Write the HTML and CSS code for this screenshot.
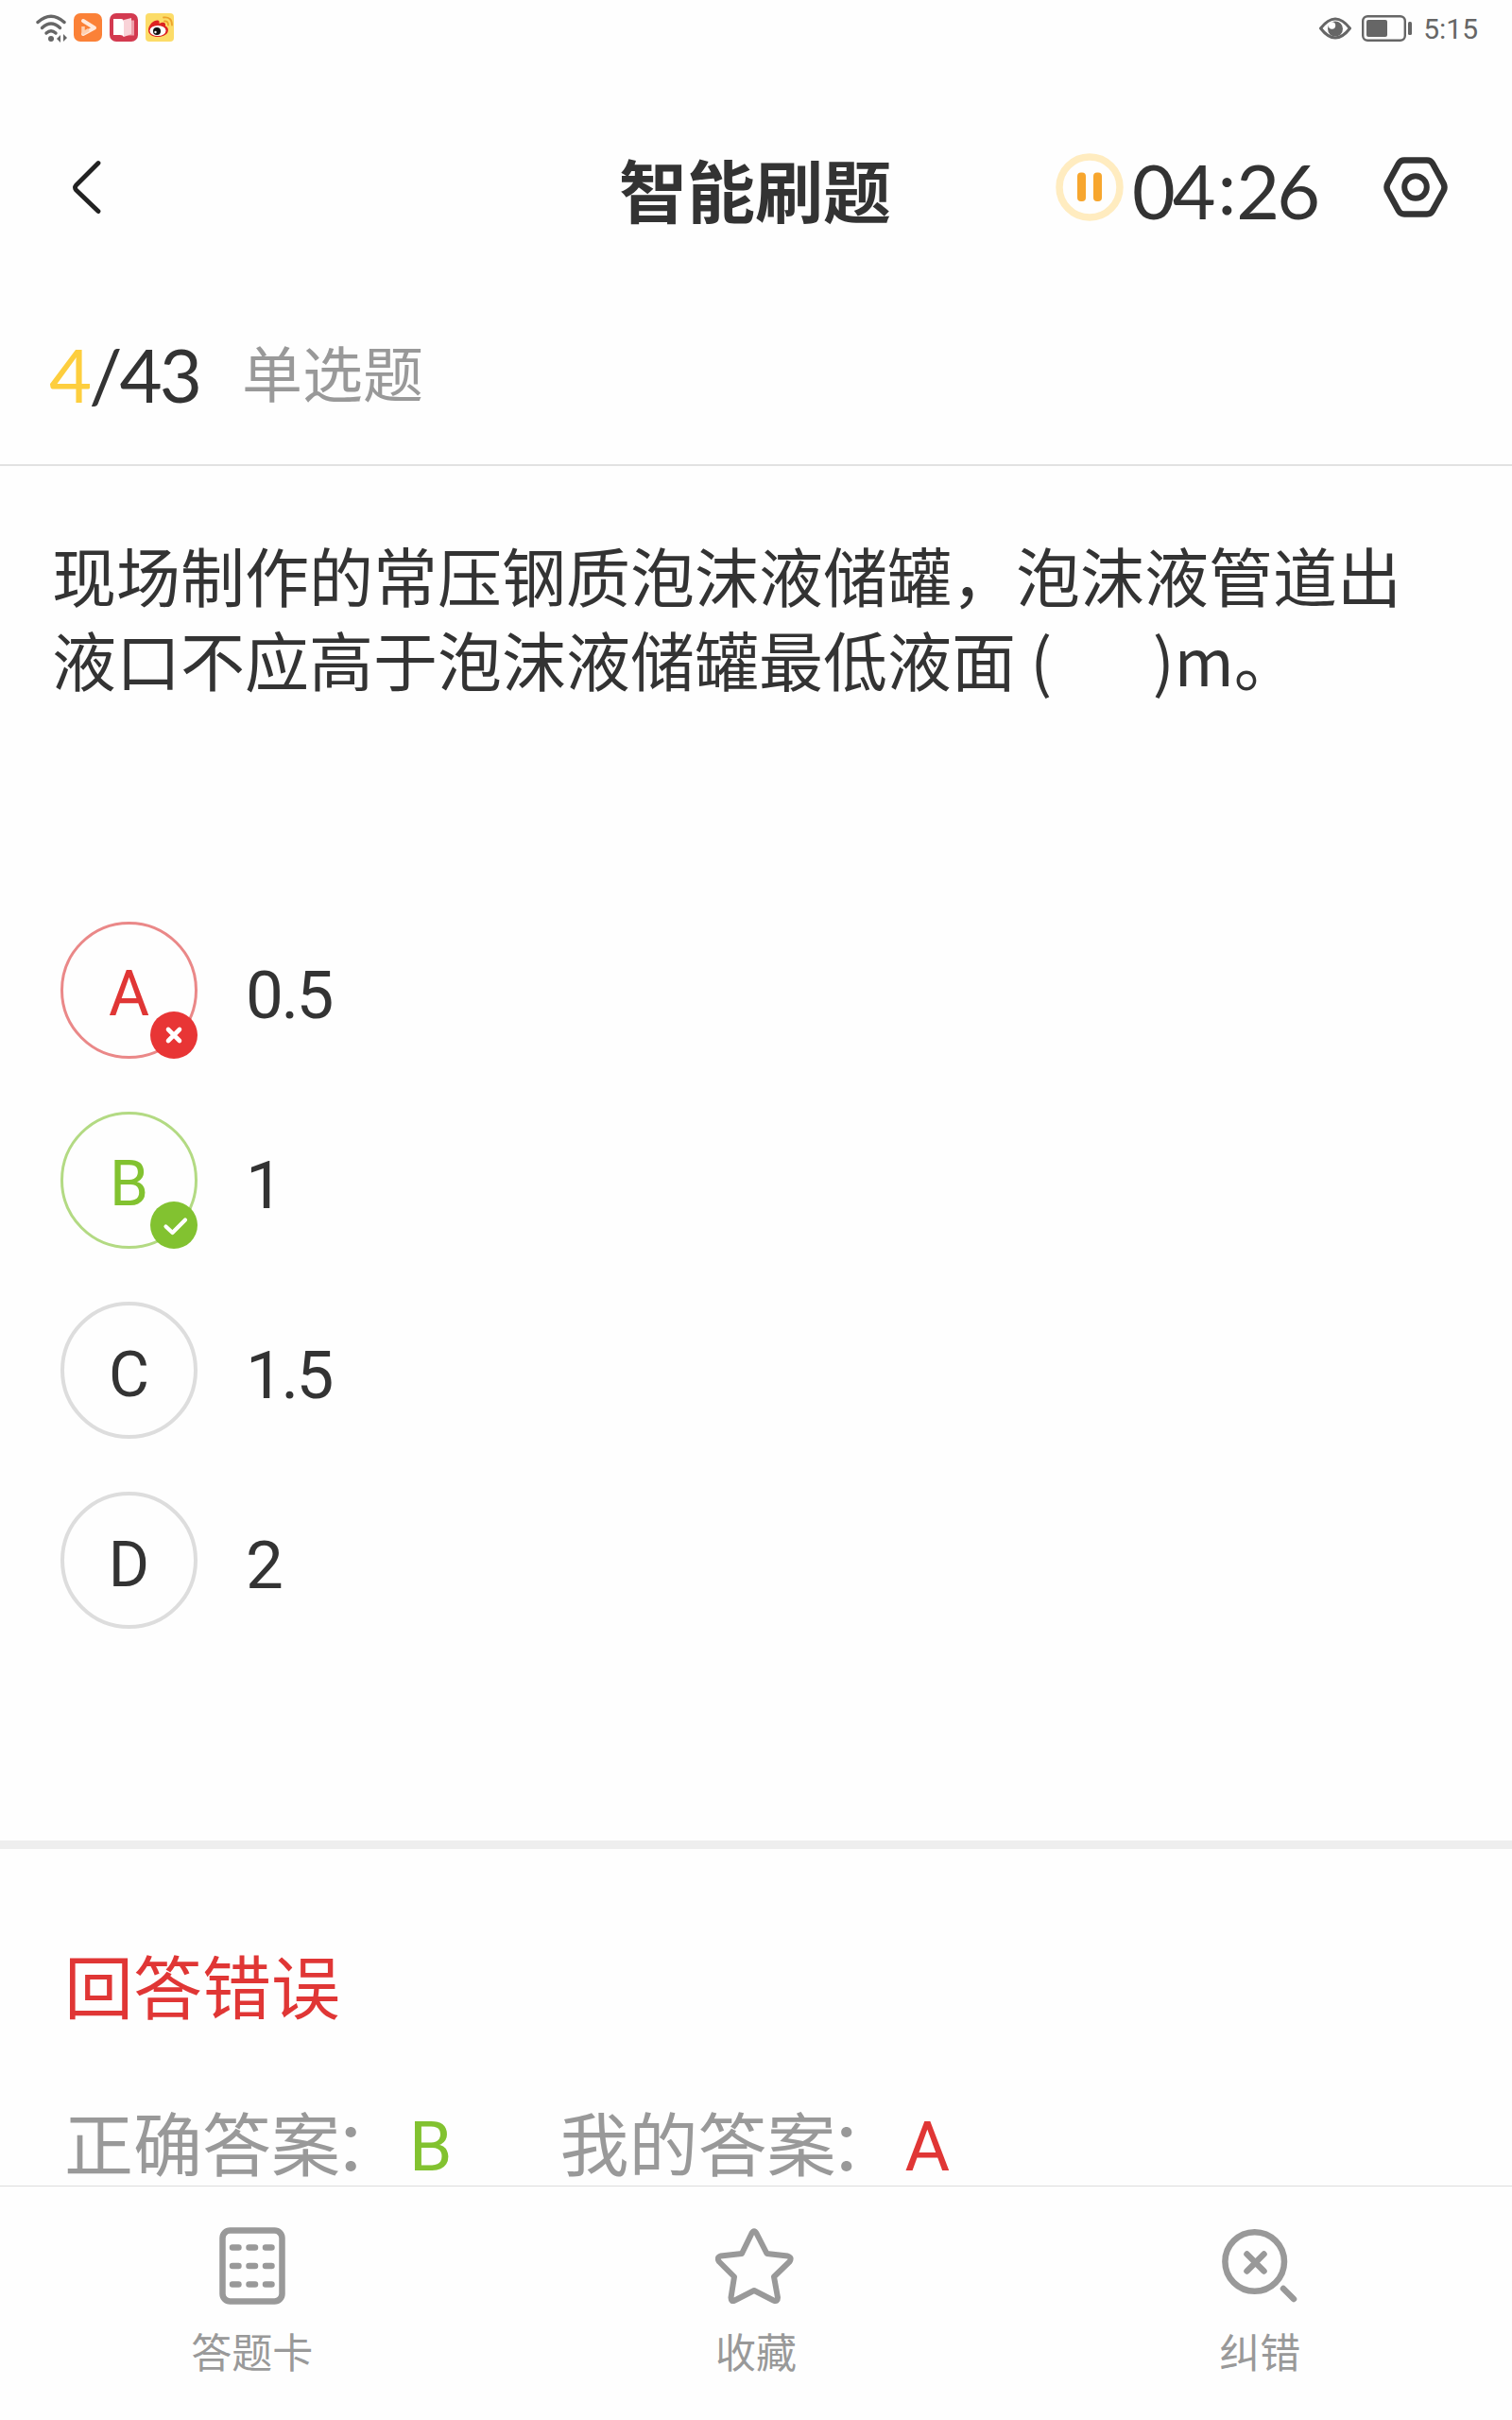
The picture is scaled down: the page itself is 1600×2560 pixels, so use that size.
FILE: index.html
```
<!DOCTYPE html>
<html lang="zh-CN">
<head>
  <meta charset="UTF-8">
  <meta name="viewport" content="width=device-width, initial-scale=1.0">
  <title>智能刷题</title>
  <link rel="stylesheet" href="styles.css">
</head>
<body>
  <!-- Status bar -->
  <div class="status-bar">
    <div class="status-left">
      <svg class="wifi" width="36" height="32" viewBox="0 0 36 32" fill="none" stroke="#666" stroke-width="3.4" stroke-linecap="round">
        <path d="M3 9.5Q17 -3 31 9.5"/>
        <path d="M7.500 15.500Q17 6.500 26.500 15.500"/>
        <path d="M12 21Q17 16.500 22 21"/>
        <circle cx="17" cy="27" r="3" fill="#666" stroke="none"/>
        <path d="M27 23v8l-4-4zM30 22v8l4-4z" fill="#666" stroke="none"/>
      </svg>
      <svg width="30" height="30" viewBox="0 0 30 30">
        <rect width="30" height="30" rx="7" fill="#fb8137"/>
        <path d="M10 8L22 15.500L10 22" fill="none" stroke="#ffe9dc" stroke-width="4" stroke-linecap="round" stroke-linejoin="round"/>
        <path d="M10 14v7l6-3.500" fill="none" stroke="#ffd0b0" stroke-width="3.500" stroke-linejoin="round"/>
      </svg>
      <svg width="30" height="30" viewBox="0 0 30 30">
        <rect width="30" height="30" rx="7" fill="#d33a50"/>
        <path d="M15 7.500h11v16H15z" fill="#eda0aa"/>
        <path d="M15 7l8-2v17l-8 3z" fill="#f9d3d8"/>
        <path d="M4 6h8q3 0 3 3v16q-1-2-4-2H4z" fill="#fff"/>
      </svg>
      <svg width="30" height="30" viewBox="0 0 30 30">
        <rect width="30" height="30" rx="4" fill="#fcdc68"/>
        <path d="M3 18C3 12 9 7 13 7.500C15 8 14.500 10 14.500 11C18 9 22 9 21 13.500C24 15 24.500 17 23.500 20C20 27 3 27 3 18z" fill="#dd2222"/>
        <ellipse cx="13" cy="18.500" rx="8.500" ry="5.500" fill="#fff"/>
        <circle cx="12" cy="19" r="4" fill="#111"/>
        <circle cx="10.500" cy="20" r="1.200" fill="#fff"/>
        <path d="M20 8.500q4-.5 4 4M19 4.500q9-1 9 8" fill="none" stroke="#eda32b" stroke-width="1.800" stroke-linecap="round"/>
      </svg>
    </div>
    <div class="status-right">
      <svg width="34" height="24" viewBox="0 0 34 24">
        <path d="M1.500 12Q17 -8 32.500 12Q17 32 1.500 12z" fill="none" stroke="#666" stroke-width="3" stroke-linejoin="round"/>
        <circle cx="17" cy="12.500" r="8" fill="#666"/>
        <circle cx="13.500" cy="9" r="3.700" fill="#fff"/>
      </svg>
      <svg class="battery" width="54" height="28" viewBox="0 0 54 28">
        <rect x="1.200" y="1.200" width="44.600" height="25.600" rx="5" fill="none" stroke="#666" stroke-width="2.400"/>
        <rect x="5" y="5" width="22" height="18" rx="2" fill="#666"/>
        <rect x="49" y="7" width="4" height="14" rx="1.500" fill="#666"/>
      </svg>
      <span class="clock">5:15</span>
    </div>
  </div>

  <!-- Header -->
  <header class="header">
    <svg class="back" width="32" height="58" viewBox="0 0 32 58" fill="none" stroke="#222" stroke-width="4.800" stroke-linecap="round" stroke-linejoin="round">
      <path d="M28 3.500L4.500 27Q2.500 29.500 4.500 32L28 54.500"/>
    </svg>
    <h1 class="title">智能刷题</h1>
    <div class="tools">
      <svg width="72" height="72" viewBox="0 0 72 72">
        <circle cx="36" cy="36" r="32" fill="none" stroke="#ffecc0" stroke-width="7.500"/>
        <rect x="23" y="20.500" width="9" height="30.500" rx="4" fill="#f7a62e"/>
        <rect x="40" y="20.500" width="9" height="30.500" rx="4" fill="#f7a62e"/>
      </svg>
      <span class="timer">04<i>:</i>26</span>
      <svg class="gear" width="68" height="64" viewBox="0 0 68 64" fill="none" stroke="#333" stroke-linejoin="round">
        <path d="M22 3.500H46Q50 3.500 52 7L63.500 28Q65.500 32 63.500 36L52 57Q50 60.500 46 60.500H22Q18 60.500 16 57L4.500 36Q2.500 32 4.500 28L16 7Q18 3.500 22 3.500z" stroke-width="6.500"/>
        <circle cx="34" cy="32" r="11.800" stroke-width="6"/>
      </svg>
    </div>
  </header>

  <!-- Progress -->
  <div class="progress">
    <span class="count"><b>4</b>/43</span>
    <span class="type">单选题</span>
  </div>

  <!-- Question -->
  <main class="question">
    <p class="stem">现场制作的常压钢质泡沫液储罐，泡沫液管道出<br>液口不应高于泡沫液储罐最低液面 (&nbsp;&nbsp;&nbsp;&nbsp;&nbsp;&nbsp;&nbsp;)m。</p>
    <div class="options">
      <div class="option wrong">
        <div class="letter">A
          <svg class="badge" viewBox="0 0 50 50">
            <circle cx="25" cy="25" r="25" fill="#e83535"/>
            <path d="M19 19L31 31M31 19L19 31" stroke="#fff" stroke-width="4.600" stroke-linecap="round"/>
          </svg>
        </div>
        <span class="value">0.5</span>
      </div>
      <div class="option right">
        <div class="letter">B
          <svg class="badge" viewBox="0 0 50 50">
            <circle cx="25" cy="25" r="25" fill="#82c230"/>
            <path d="M16.500 26.500L23.500 33L37 19.500" fill="none" stroke="#fff" stroke-width="4.200" stroke-linecap="round" stroke-linejoin="round"/>
          </svg>
        </div>
        <span class="value">1</span>
      </div>
      <div class="option">
        <div class="letter">C</div>
        <span class="value">1.5</span>
      </div>
      <div class="option">
        <div class="letter">D</div>
        <span class="value">2</span>
      </div>
    </div>
  </main>

  <!-- Result -->
  <section class="result">
    <h2 class="verdict">回答错误</h2>
    <div class="answers">
      <span>正确答案<i>：</i><em class="green">B</em></span>
      <span>我的答案<i>：</i><em class="red">A</em></span>
    </div>
  </section>

  <!-- Bottom bar -->
  <nav class="tabs">
    <div class="tab">
      <svg width="70" height="82" viewBox="0 0 70 82">
        <rect x="3.500" y="3.500" width="63" height="75" rx="8" fill="none" stroke="#999" stroke-width="6.500"/>
        <path d="M14 21.500h6.500M31.500 21.500h6.500M49 21.500h6.500M14 41h6.500M31.500 41h6.500M49 41h6.500M14 60.500h6.500M31.500 60.500h6.500M49 60.500h6.500" stroke="#999" stroke-width="6.500" stroke-linecap="round"/>
      </svg>
      <span>答题卡</span>
    </div>
    <div class="tab">
      <svg width="86" height="82" viewBox="0 0 86 82">
        <path d="M38.500 6.500Q41 2 43.500 6.500L54.500 28L76.500 30.500Q81.500 32 78.500 36.500L62 52.500L66 74.500Q66 79.500 61.500 77.500L41 67L20.500 77.500Q16.500 79.500 16.500 74.500L20 52.500L4 36.500Q1 32 5.500 30.500L28 28z" fill="none" stroke="#999" stroke-width="6" stroke-linejoin="round"/>
      </svg>
      <span>收藏</span>
    </div>
    <div class="tab">
      <svg width="80" height="82" viewBox="0 0 80 82" fill="none" stroke="#999" stroke-linecap="round">
        <circle cx="34.700" cy="36.500" r="31.300" stroke-width="6.500"/>
        <path d="M26.500 28.500L44.500 46.500M44.500 28.500L26.500 46.500M65 65L76 76" stroke-width="6.500"/>
      </svg>
      <span>纠错</span>
    </div>
  </nav>
</body>
</html>
```
FILE: styles.css
```
* {
  box-sizing: border-box;
}

body {
  margin: 0;
  width: 1600px;
  height: 2560px;
  overflow: hidden;
  display: flex;
  flex-direction: column;
  font-family: "Noto Sans CJK SC", sans-serif;
  background-color: #fefefe;
  color: #333;
}

h1, h2, p {
  margin: 0;
}

svg {
  display: block;
  flex: none;
}

/* Status bar */
.status-bar {
  height: 60px;
  padding: 0 36px 0 37px;
  display: flex;
  justify-content: space-between;
  align-items: center;
}

.status-left {
  display: flex;
  gap: 8px;
}

.wifi {
  margin-right: -3px;
}

.status-right {
  display: flex;
  align-items: center;
  gap: 11px;
}

.clock {
  font-family: Roboto, sans-serif;
  font-size: 30px;
  line-height: 32px;
  color: #666;
  padding-top: 2px;
}

/* Header */
.header {
  height: 276px;
  padding: 0 68px 0 76px;
  display: grid;
  grid-template-columns: 579px auto 1fr;
  align-items: center;
}

.title {
  font-size: 72px;
  line-height: 80px;
  font-weight: 700;
  padding-top: 1px;
}

.tools {
  display: flex;
  align-items: center;
  justify-content: flex-end;
}

.timer {
  margin: 8px 70px 0 9px;
  font-family: Lato, sans-serif;
  font-size: 79px;
  line-height: 80px;
  letter-spacing: -3px;
}

.timer i {
  font-style: normal;
  padding: 0 3px 0 5px;
  position: relative;
  top: -5px;
}

/* Progress */
.progress {
  height: 157px;
  padding: 13px 52px 0;
  display: flex;
  align-items: flex-start;
  gap: 45px;
  border-bottom: 2px solid #e2e2e2;
}

.count {
  font-family: Lato, sans-serif;
  font-size: 78px;
  line-height: 94px;
  letter-spacing: -3px;
}

.count b {
  font-weight: 400;
  color: #fdce3e;
}

.type {
  font-size: 64px;
  line-height: 86px;
  color: #999;
}

/* Question */
.question {
  height: 1454px;
  padding: 70px 55px 0;
}

.stem {
  font-size: 68px;
  line-height: 89px;
  white-space: nowrap;
}

.options {
  margin-top: 234px;
  padding-left: 9px;
  display: flex;
  flex-direction: column;
  gap: 56px;
}

.option {
  display: flex;
  align-items: center;
  gap: 51px;
}

.letter {
  position: relative;
  width: 145px;
  height: 145px;
  border: 4px solid #ddd;
  border-radius: 50%;
  font-family: Roboto, sans-serif;
  font-size: 66px;
  line-height: 148px;
  text-align: center;
}

.badge {
  position: absolute;
  right: -3px;
  bottom: -3px;
  width: 50px;
  height: 50px;
}

.wrong .letter {
  border: 3px solid #ea8888;
  color: #e03635;
}

.right .letter {
  border: 3px solid #b3da83;
  color: #82c230;
}

.value {
  font-family: Roboto, sans-serif;
  font-size: 71px;
  line-height: 100px;
  letter-spacing: -2.5px;
  padding-top: 10px;
}

/* Result */
.result {
  height: 365px;
  padding: 89px 68px 0;
  border-top: 9px solid #eee;
}

.verdict {
  font-size: 73px;
  line-height: 106px;
  font-weight: 400;
  color: #e03635;
}

.answers {
  margin-top: 68px;
  display: flex;
  gap: 114px;
  font-size: 73px;
  line-height: 90px;
  color: #999;
}

.answers i {
  font-style: normal;
  margin: 0 7px 0 -7px;
}

.answers em {
  font-family: Roboto, sans-serif;
  font-style: normal;
}

.green {
  color: #82c230;
}

.red {
  color: #e03635;
}

/* Bottom bar */
.tabs {
  height: 248px;
  padding-top: 43px;
  display: grid;
  grid-template-columns: repeat(3, 1fr);
  border-top: 1px solid #ddd;
}

.tab {
  display: flex;
  flex-direction: column;
  align-items: center;
  gap: 17px;
  font-size: 43px;
  line-height: 62px;
  color: #999;
}
```
